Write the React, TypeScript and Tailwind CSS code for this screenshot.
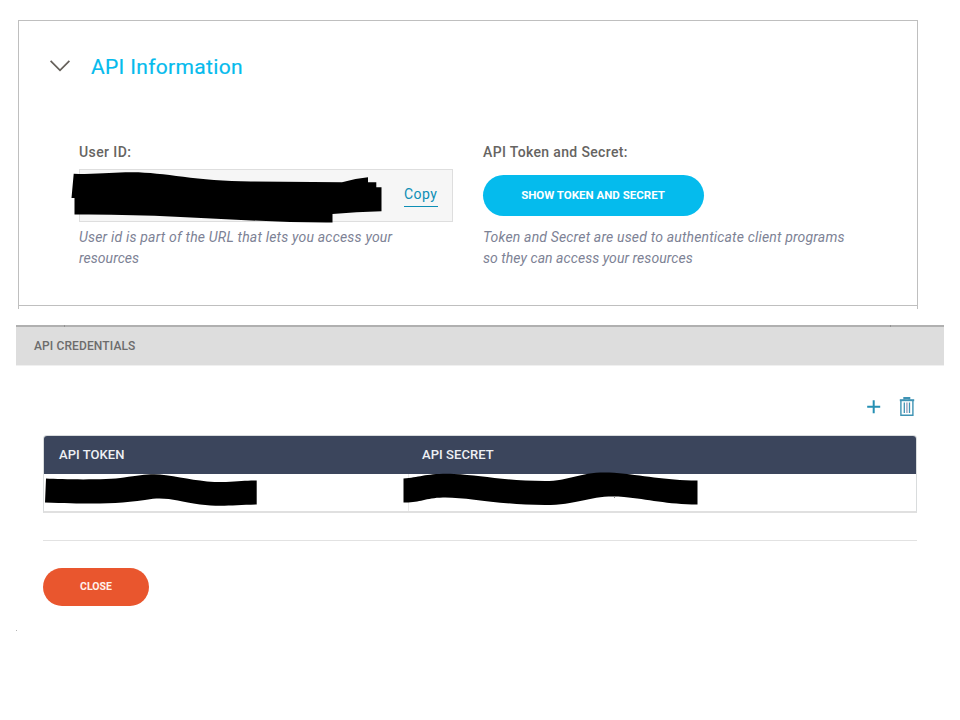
import React from "react";

const Redaction = ({ d, className, w, h }: { d: string; className: string; w: number; h: number }) => (
  <svg aria-hidden="true" width={w} height={h} viewBox={`0 0 ${w} ${h}`} className={`pointer-events-none absolute ${className}`}>
    <path d={d} fill="#000" />
  </svg>
);

const PlusIcon = () => (
  <svg width="14" height="14" viewBox="0 0 14 14" fill="none" stroke="#2590b4" strokeWidth="2">
    <path d="M6.7 .3v13M.2 6.8h13" />
  </svg>
);

const TrashIcon = () => (
  <svg width="16" height="20" viewBox="0 0 16 20" fill="none" stroke="#3f93b4">
    <path d="M.8 3.2h14.4" strokeWidth="2" />
    <path d="M5.3 2.5V1h5V2.5" strokeWidth="2" />
    <path d="M1.9 4v14.3h12V4" strokeWidth="1.4" />
    <path d="M5.3 5.5v10.5" strokeWidth="1.3" />
    <path d="M7.9 5.5v10.5" strokeWidth="1.8" stroke="#b1b5cc" />
    <path d="M10.5 5.5v10.5" strokeWidth="1.3" />
  </svg>
);

function ApiInformation() {
  return (
    <section className="ml-[18px] h-[289px] w-[900px] border-x border-t border-[#bfbfbf]">
      <div className="h-[285px] border-b border-[#bfbfbf] pt-[30px]">
        <header className="flex h-8 items-center pl-[31px]">
          <svg width="20" height="12" viewBox="0 0 20 12" fill="none" stroke="#66615b" strokeWidth="1.8" className="mt-[-2px]">
            <path d="M.6 .8 10 10.3 19.4 .8" />
          </svg>
          <h1 className="ml-[21px] text-[21px] leading-8 tracking-[0.33px] text-[#05bbed] [-webkit-text-stroke:0.2px_#05bbed]">API Information</h1>
        </header>
        <div className="mt-[59px] flex pl-[60px]">
          <div className="w-[404px]">
            <h2 className="h-[27px] text-[14px] leading-5 font-medium tracking-[0.4px] text-[#666462]">User ID:</h2>
            <div className="relative flex h-[53px] w-[374px] items-start justify-end border border-[#dedede] bg-[#f6f6f6] pt-[14px] pr-[14px]">
              <a className="h-[23px] w-[34px] border-b border-[#0d8eb5] text-[14px] leading-[21px] tracking-[0.45px] whitespace-nowrap text-[#0d8eb5]">Copy</a>
              <Redaction
                w={312}
                h={54}
                className="top-0 left-[-9px]"
                d="M2.7 3.7C28 4.5 42 2.3 60 2.3C92 2 125 11.3 180 11.5L271 12.3Q285 8.5 297 7.3V12.3H305.3V17.3H310.5V41.3Q285 42 261.5 44V52.5C180 53 100 43.5 3.5 44.5V28H.5Z"
              />
            </div>
            <p className="mt-[5px] w-[340px] text-[14px] leading-[21px] tracking-[0.19px] whitespace-nowrap text-[#7d8295] italic">
              User id is part of the URL that lets you access your<br />
              <span className="tracking-[0.05px]">resources</span>
            </p>
          </div>
          <div>
            <h2 className="h-[33px] text-[14px] leading-5 font-medium tracking-[0.35px] text-[#666462]">API Token and Secret:</h2>
            <button className="block h-[41px] w-[221px] rounded-full bg-[#05bbed] pr-[7px] pl-[6px] text-[11.5px] font-bold whitespace-nowrap text-white">SHOW TOKEN AND SECRET</button>
            <p className="mt-[11px] text-[14px] leading-[21px] whitespace-nowrap text-[#7d8295] italic">
              <span className="tracking-[0.17px]">Token and Secret are used to authenticate client programs</span>
              <br />
              <span className="tracking-[0.05px]">so they can access your resources</span>
            </p>
          </div>
        </div>
      </div>
    </section>
  );
}

function ApiCredentials() {
  return (
    <section className="mt-[16px] ml-4 w-[928px]">
      <header className="relative h-10 border-t-2 border-[#b0b0b0] bg-[#dddddd] pl-[18px]">
        <h2 className="text-[12px] leading-[38px] font-medium tracking-[0.12px] text-[#6c6c6c]">API CREDENTIALS</h2>
        <span className="absolute top-[-2px] left-12 h-[2px] w-px bg-[#929292]" />
        <span className="absolute top-[-2px] left-[874px] h-[2px] w-px bg-[#929292]" />
      </header>
      <div className="h-px bg-[#f0f0f0]" />
      <div className="flex h-[69px] items-start justify-end gap-[18px] pt-[31px] pr-[29px]">
        <div className="pt-[3px]"><PlusIcon /></div>
        <TrashIcon />
      </div>
      <div className="relative ml-[27px] h-[78px] w-[874px] rounded-t-[4px] border border-b-2 border-[#d9dcdd] border-b-[#e0e0e0]">
        <div className="flex h-[38px] items-center rounded-t-[3px] bg-[#3b455c] text-[13px] font-medium tracking-[0.06px] text-[#eef0f4]">
          <span className="w-[363px] pl-[15px]">API TOKEN</span>
          <span className="pl-[15px]">API SECRET</span>
        </div>
        <div className="flex h-[37px]">
          <div className="w-[365px] border-r border-[#e9e9e9]" />
        </div>
        <Redaction
          w={214}
          h={34}
          className="top-[38px] left-0"
          d="M2 4.5C20 5.5 62 6.2 80 3.5C98 1 108 -.8 122 1.2C143 4 158 8.5 182 8C195 7.5 204 6.2 212.7 6.5V30.5C190 31 176 33 156 30.5C135 27.5 126 23.5 109 24.8C75 30 56 30.5 1 28.5Z"
        />
        <Redaction
          w={296}
          h={36}
          className="top-[36px] left-[358px]"
          d="M1.5 6.5C18 5.5 25 1 52 2C78 3 102 9 143 9C170 9 179 -1.5 212 .8C241 3 262 8.5 295.5 8.5V32.5C265 32.5 246 27 222 25C189 22 179 33 143 33C96 33 66 25 41 25.5C22 26 18 31 1.5 30.5Z"
        />
        <span className="absolute top-[60px] left-[570px] h-[2px] w-px bg-[#8a8a8a]" />
      </div>
      <div className="mt-[27px] ml-[27px] w-[874px] border-t border-[#e2e2e2]" />
      <button className="mt-[27px] ml-[27px] block h-[38px] w-[106px] rounded-full bg-[#e9562e] text-[10.5px] font-bold text-[#fff0ea]">CLOSE</button>
      <div className="mt-[24px] h-px w-px bg-[#b5b5b5]" />
    </section>
  );
}

export default function App() {
  return (
    <main className="h-[720px] w-[960px] overflow-hidden bg-white pt-5 font-[Roboto,sans-serif]">
      <ApiInformation />
      <ApiCredentials />
    </main>
  );
}
